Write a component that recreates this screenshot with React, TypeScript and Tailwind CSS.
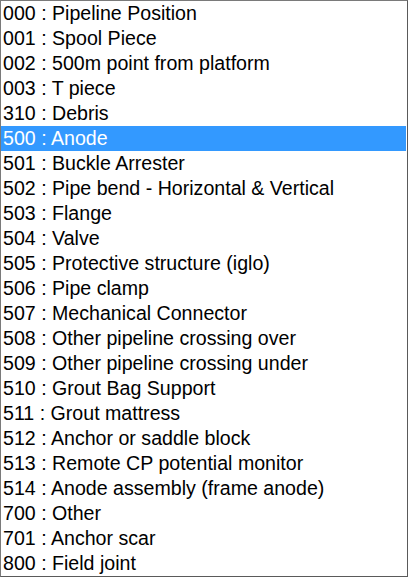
const ITEMS = [
  '000 : Pipeline Position',
  '001 : Spool Piece',
  '002 : 500m point from platform',
  '003 : T piece',
  '310 : Debris',
  '500 : Anode',
  '501 : Buckle Arrester',
  '502 : Pipe bend - Horizontal & Vertical',
  '503 : Flange',
  '504 : Valve',
  '505 : Protective structure (iglo)',
  '506 : Pipe clamp',
  '507 : Mechanical Connector',
  '508 : Other pipeline crossing over',
  '509 : Other pipeline crossing under',
  '510 : Grout Bag Support',
  '511 : Grout mattress',
  '512 : Anchor or saddle block',
  '513 : Remote CP potential monitor',
  '514 : Anode assembly (frame anode)',
  '700 : Other',
  '701 : Anchor scar',
  '800 : Field joint',
];

const SELECTED = 5;

export default function App() {
  return (
    <div className="h-[577px] w-[408px] border border-[#7a7a7a] border-r-[#5a5a5a] border-b-[#5a5a5a] bg-white font-['Liberation_Sans',Arial,sans-serif] text-[19.6px]">
      <ul className="flex flex-col pr-[1px]">
        {ITEMS.map((item, i) => (
          <li
            key={item}
            className={
              i === SELECTED
                ? 'flex h-[25px] items-center whitespace-nowrap bg-[#3399ff] pl-[2px] leading-none text-white'
                : 'flex h-[25px] items-center whitespace-nowrap pl-[2px] leading-none text-black'
            }
          >
            {item}
          </li>
        ))}
      </ul>
    </div>
  );
}
